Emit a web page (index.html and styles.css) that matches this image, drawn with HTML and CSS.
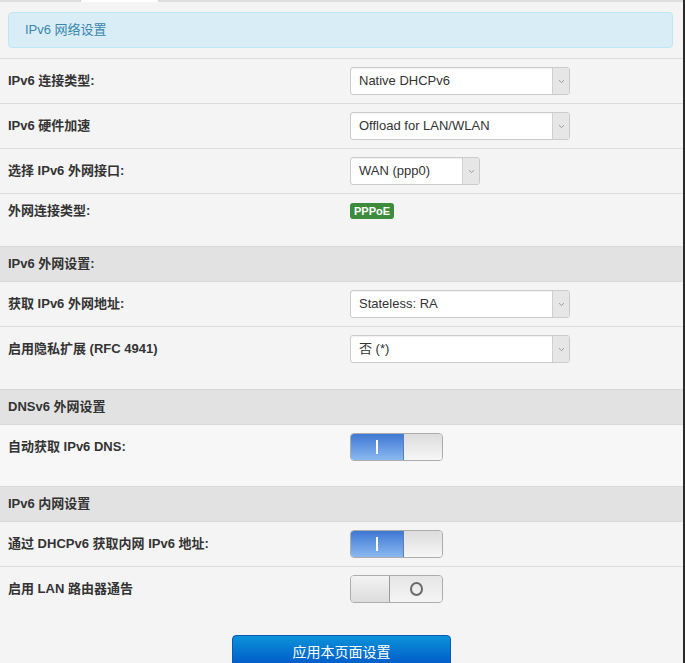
FILE: index.html
```html
<!DOCTYPE html>
<html lang="zh-CN">
<head>
<meta charset="utf-8">
<title>IPv6 网络设置</title>
<link rel="stylesheet" href="styles.css">
</head>
<body>
<div class="page">
  <div class="tabbar"><span class="tab-gap"></span><span class="tab-active"></span><span class="tab-rest"></span></div>
  <div class="alert-wrap">
    <div class="alert">IPv6 网络设置</div>
  </div>

  <div class="section">
    <div class="row">
      <div class="label">IPv6 连接类型:</div>
      <div class="control"><div class="select w220"><span class="sel-text">Native DHCPv6</span><span class="sel-arrow"><svg width="7" height="5" viewBox="0 0 7 5"><path d="M1 1.2 L3.5 3.6 L6 1.2" fill="none" stroke="#9a9a9a" stroke-width="1"/></svg></span></div></div>
    </div>
    <div class="row">
      <div class="label">IPv6 硬件加速</div>
      <div class="control"><div class="select w220"><span class="sel-text">Offload for LAN/WLAN</span><span class="sel-arrow"><svg width="7" height="5" viewBox="0 0 7 5"><path d="M1 1.2 L3.5 3.6 L6 1.2" fill="none" stroke="#9a9a9a" stroke-width="1"/></svg></span></div></div>
    </div>
    <div class="row">
      <div class="label">选择 IPv6 外网接口:</div>
      <div class="control"><div class="select w130"><span class="sel-text">WAN (ppp0)</span><span class="sel-arrow"><svg width="7" height="5" viewBox="0 0 7 5"><path d="M1 1.2 L3.5 3.6 L6 1.2" fill="none" stroke="#9a9a9a" stroke-width="1"/></svg></span></div></div>
    </div>
    <div class="row last short">
      <div class="label">外网连接类型:</div>
      <div class="control"><span class="badge">PPPoE</span></div>
    </div>
  </div>

  <div class="section-head">IPv6 外网设置:</div>
  <div class="section">
    <div class="row">
      <div class="label">获取 IPv6 外网地址:</div>
      <div class="control"><div class="select w220"><span class="sel-text">Stateless: RA</span><span class="sel-arrow"><svg width="7" height="5" viewBox="0 0 7 5"><path d="M1 1.2 L3.5 3.6 L6 1.2" fill="none" stroke="#9a9a9a" stroke-width="1"/></svg></span></div></div>
    </div>
    <div class="row last">
      <div class="label">启用隐私扩展 (RFC 4941)</div>
      <div class="control"><div class="select w220"><span class="sel-text">否 (*)</span><span class="sel-arrow"><svg width="7" height="5" viewBox="0 0 7 5"><path d="M1 1.2 L3.5 3.6 L6 1.2" fill="none" stroke="#9a9a9a" stroke-width="1"/></svg></span></div></div>
    </div>
  </div>

  <div class="section-head">DNSv6 外网设置</div>
  <div class="section light">
    <div class="row last">
      <div class="label">自动获取 IPv6 DNS:</div>
      <div class="control"><div class="toggle on"><span class="t-on"><i class="bar"></i></span><span class="t-off"></span></div></div>
    </div>
  </div>

  <div class="section-head">IPv6 内网设置</div>
  <div class="section">
    <div class="row">
      <div class="label">通过 DHCPv6 获取内网 IPv6 地址:</div>
      <div class="control"><div class="toggle on"><span class="t-on"><i class="bar"></i></span><span class="t-off"></span></div></div>
    </div>
    <div class="row last">
      <div class="label">启用 LAN 路由器通告</div>
      <div class="control"><div class="toggle off"><span class="t-off"></span><span class="t-on"><i class="ring"></i></span></div></div>
    </div>
  </div>

  <div class="actions">
    <button class="btn-apply" type="button">应用本页面设置</button>
  </div>
</div>
</body>
</html>
```

FILE: styles.css
```css
html, body {
  margin: 0;
  padding: 0;
  background: #f4f4f4;
}
body {
  font-family: "Liberation Sans", "Noto Sans CJK SC", sans-serif;
  font-size: 13px;
  color: #333;
}
.page {
  width: 685px;
  min-height: 663px;
  box-sizing: border-box;
  border-right: 2px solid #2a2a2a;
  background: #f4f4f4;
}
.tabbar {
  display: flex;
  height: 2px;
}
.tab-gap {
  width: 80px;
  background: #dedede;
}
.tab-active {
  width: 77px;
  background: #ffffff;
  border-left: 1px solid #d6d6d6;
  border-right: 1px solid #d6d6d6;
}
.tab-rest {
  flex: 1;
  background: #dedede;
}
.alert-wrap {
  padding: 10px 10px 10px 8px;
  border-bottom: 1px solid #dcdcdc;
}
.alert {
  height: 34px;
  line-height: 34px;
  background: #d9edf7;
  border: 1px solid #bce8f1;
  border-radius: 4px;
  color: #3a87ad;
  padding-left: 16px;
}
.section {
  padding-bottom: 18px;
}
.section.light {
  background: #f7f7f7;
  padding-bottom: 17px;
}
.row {
  display: grid;
  grid-template-columns: 342px 1fr;
  align-items: center;
  padding: 8px 0 8px 8px;
  border-bottom: 1px solid #dcdcdc;
}
.row.last {
  border-bottom: none;
}
.label {
  font-weight: bold;
  color: #333;
  line-height: 28px;
}
.row.short .label {
  line-height: 18px;
}
.control {
  display: flex;
  align-items: center;
}
.select {
  display: flex;
  height: 28px;
  box-sizing: border-box;
  background: #fff;
  border: 1px solid #cbcbcb;
  border-radius: 3px;
  box-shadow: inset 0 1px 1px rgba(0,0,0,0.06);
  overflow: hidden;
}
.w220 { width: 220px; }
.w130 { width: 130px; }
.sel-text {
  flex: 1;
  padding-left: 8px;
  line-height: 26px;
  color: #333;
  font-size: 13px;
}
.sel-arrow {
  width: 16px;
  background: #e6e6e6;
  border-left: 1px solid #d0d0d0;
  display: flex;
  align-items: center;
  justify-content: center;
}
.badge {
  display: inline-block;
  background: #3d8b3d;
  color: #fff;
  font-weight: bold;
  font-size: 11px;
  line-height: 16px;
  padding: 0 4px;
  border-radius: 3px;
}
.section-head {
  height: 34px;
  line-height: 34px;
  background: #e2e2e2;
  border-top: 1px solid #d8d8d8;
  border-bottom: 1px solid #d8d8d8;
  padding-left: 8px;
  font-weight: bold;
  color: #333;
}
.toggle {
  display: flex;
  width: 93px;
  height: 28px;
  box-sizing: border-box;
  border: 1px solid #acacac;
  border-radius: 4px;
  overflow: hidden;
}
.toggle.on .t-on {
  width: 52px;
  background: linear-gradient(#3f78d3, #8ab8f1);
  border-right: 1px solid #5a7fb8;
  display: flex;
  align-items: center;
  justify-content: center;
}
.toggle.on .t-off {
  flex: 1;
  background: linear-gradient(#dcdcdc, #f6f6f6);
}
.toggle.off .t-off {
  width: 38px;
  background: linear-gradient(#f3f3f3, #dcdcdc);
  border-right: 1px solid #9c9c9c;
}
.toggle.off .t-on {
  flex: 1;
  background: linear-gradient(#e6e6e6, #f4f4f4);
  display: flex;
  align-items: center;
  justify-content: center;
}
.bar {
  display: block;
  width: 2px;
  height: 14px;
  background: #fff;
}
.ring {
  display: block;
  width: 9px;
  height: 10px;
  border: 2px solid #6a6a6a;
  border-radius: 50%;
}
.actions {
  display: flex;
  justify-content: center;
  padding-top: 6px;
}
.btn-apply {
  width: 219px;
  height: 32px;
  border: 1px solid #0a58b0;
  border-radius: 4px;
  background: linear-gradient(#0c93d9, #0058c9);
  color: #fff;
  font-family: "Liberation Sans", "Noto Sans CJK SC", sans-serif;
  font-size: 14px;
  padding: 0;
}
```
